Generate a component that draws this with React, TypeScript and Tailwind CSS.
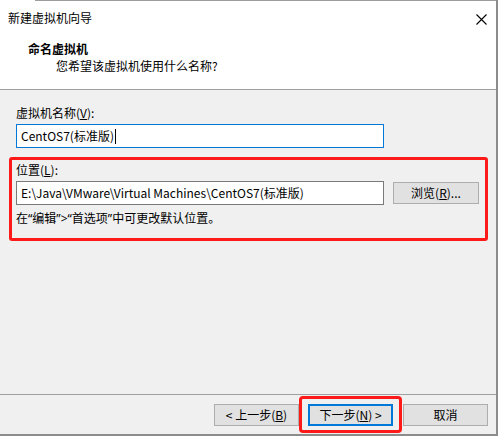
import React from "react";

const Btn = ({ children, focused }: { children: React.ReactNode; focused?: boolean }) => (
  <button
    className={
      focused
        ? "w-[85px] h-[22px] bg-[#e1e1e1] border-2 border-[#0078d7] text-[12px] leading-[16px] text-black"
        : "w-[85px] h-[22px] bg-[#e1e1e1] border border-[#adadad] text-[12px] leading-[16px] text-black"
    }
  >
    {children}
  </button>
);

// narrow latin quotes, like the dialog font draws them
const Q = ({ children }: { children: React.ReactNode }) => (
  <span className="font-['Noto_Sans',sans-serif]">{children}</span>
);

export default function App() {
  return (
    <div className="w-[498px] h-[436px] flex flex-col bg-[#f0f0f0] text-black text-[12px] leading-[16px] font-['Noto_Sans_CJK_SC','Noto_Sans',sans-serif] overflow-hidden">
      <div className="flex flex-1 min-h-0">
        <div className="flex-1 flex flex-col min-w-0">
          {/* header */}
          <div className="h-[90px] bg-white border-b border-[#a0a0a0] flex flex-col">
            <div className="h-px ml-[35px] bg-[#9c9c9c]" />
            <div className="flex items-center justify-between pl-[8px] pr-[9px] pt-[9px]">
              <span>新建虚拟机向导</span>
              <svg width="11" height="11" viewBox="0 0 11 11" className="mt-[2px]">
                <path d="M0.5 0.5 L10.5 10.5 M10.5 0.5 L0.5 10.5" stroke="#000" strokeWidth="1.1" />
              </svg>
            </div>
            <div className="pl-[28px] mt-[15px] font-bold">命名虚拟机</div>
            <div className="pl-[56px] mt-px">您希望该虚拟机使用什么名称?</div>
          </div>

          {/* body */}
          <div className="flex-1 px-[9px] pt-[15px]">
            <div className="px-[7px]">
              <div>
                虚拟机名称(<span className="underline">V</span>):
              </div>
              <div className="mt-[3px] w-[368px] h-[24px] bg-white border border-[#0078d7] flex items-center pl-[4px]">
                <span>CentOS7(标准版)</span>
                <span className="w-px h-[15px] bg-black ml-px" />
              </div>
            </div>

            <div className="mt-[9px] w-[479px] h-[84px] border-[3px] border-[#ff1a1a] rounded-[3px] pl-[4px] pt-[2px]">
              <div>
                位置(<span className="underline">L</span>):
              </div>
              <div className="mt-[3px] flex items-center">
                <div className="w-[368px] h-[24px] bg-white border border-[#7a7a7a] flex items-center pl-[4px]">
                  E:\Java\VMware\Virtual Machines\CentOS7(标准版)
                </div>
                <button className="ml-[9px] w-[86px] h-[22px] bg-[#e1e1e1] border border-[#adadad] text-[12px] leading-[16px]">
                  浏览(<span className="underline">R</span>)...
                </button>
              </div>
              <div className="mt-[5px]">
                在<Q>“</Q>编辑<Q>”{">"}“</Q>首选项<Q>”</Q>中可更改默认位置。
              </div>
            </div>
          </div>

          {/* footer */}
          <div className="h-[40px] border-t border-[#a0a0a0] flex justify-end items-start pt-px pr-[8px]">
            <div className="flex items-center h-[37px]">
              <Btn>
                &lt; 上一步(<span className="underline">B</span>)
              </Btn>
              <div className="h-[37px] border-[3px] border-[#ff1a1a] rounded-[4px] px-[6px] flex items-center">
                <Btn focused>
                  下一步(<span className="underline">N</span>) &gt;
                </Btn>
              </div>
              <div className="ml-px">
                <Btn>取消</Btn>
              </div>
            </div>
          </div>
        </div>
        <div className="w-[2px] bg-[#8c8c8c]" />
      </div>
      <div className="h-[2px] bg-[#8c8c8c]" />
    </div>
  );
}
